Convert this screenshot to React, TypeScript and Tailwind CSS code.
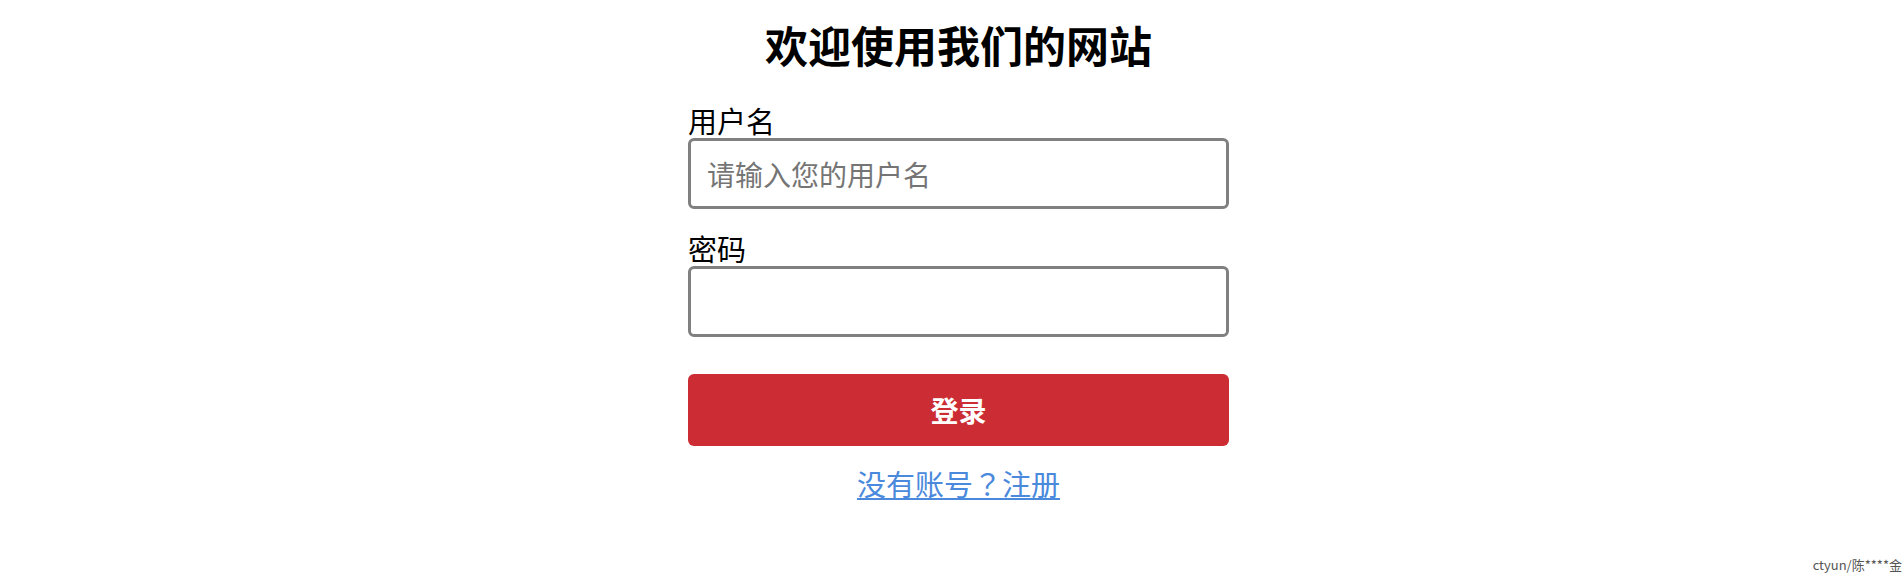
import { useState } from 'react';

const cjk = '"Noto Sans CJK SC", "Noto Sans", sans-serif';

export default function App() {
  const [username, setUsername] = useState('');
  const [password, setPassword] = useState('');

  return (
    <div
      className="relative flex min-h-[584px] w-full justify-center bg-white pl-[13px] text-black"
      style={{ fontFamily: cjk }}
    >
      <form
        className="flex w-[541px] flex-col"
        onSubmit={(e) => e.preventDefault()}
      >
        <h2 className="mt-[18px] text-center text-[43px] font-bold leading-[52px]">
          欢迎使用我们的网站
        </h2>

        {/* Username */}
        <label
          htmlFor="username"
          className="mt-[33px] text-[29px] leading-[35px]"
        >
          用户名
        </label>
        <input
          id="username"
          value={username}
          onChange={(e) => setUsername(e.target.value)}
          placeholder="请输入您的用户名"
          className="h-[71px] rounded-[6px] border-[3px] border-[#808080] px-[16px] text-[28px] outline-none placeholder:text-[#757575]"
        />

        {/* Password */}
        <label
          htmlFor="password"
          className="mt-[22px] text-[29px] leading-[35px]"
        >
          密码
        </label>
        <input
          id="password"
          type="password"
          value={password}
          onChange={(e) => setPassword(e.target.value)}
          className="h-[71px] rounded-[6px] border-[3px] border-[#808080] px-[16px] text-[28px] outline-none"
        />

        <button
          type="submit"
          className="mt-[37px] h-[72px] rounded-[6px] bg-[#cc2c33] text-[28px] font-bold text-white"
        >
          登录
        </button>

        <div className="mt-[19px] text-center">
          <a
            href="#"
            className="text-[29px] leading-[36px] text-[#4a89dc] underline"
          >
            没有账号
            <span style={{ fontFamily: '"Noto Sans CJK JP", sans-serif' }}>？</span>
            注册
          </a>
        </div>
      </form>

      <span className="absolute bottom-[10px] right-[2px] text-[13px] text-[#555]">
        ctyun/陈****金
      </span>
    </div>
  );
}
